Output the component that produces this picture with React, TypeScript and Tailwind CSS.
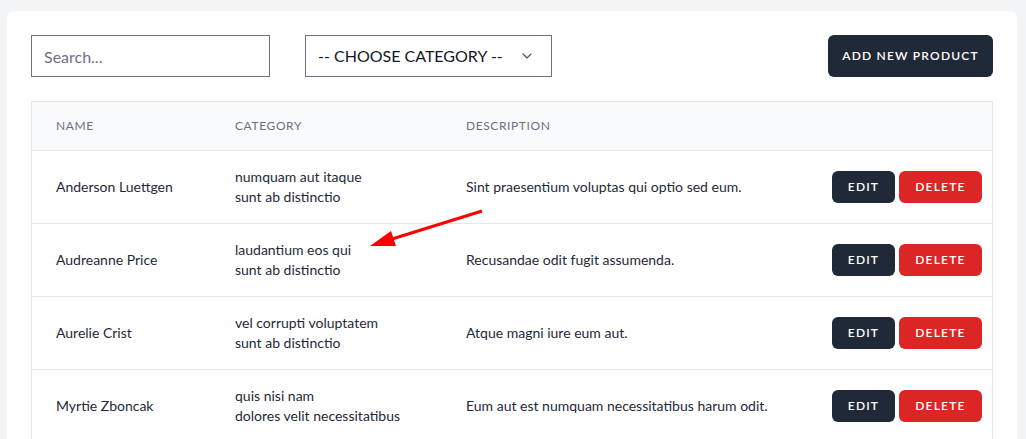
import { ChevronDown } from "lucide-react";

const products = [
  { name: "Anderson Luettgen", category: ["numquam aut itaque", "sunt ab distinctio"], description: "Sint praesentium voluptas qui optio sed eum." },
  { name: "Audreanne Price", category: ["laudantium eos qui", "sunt ab distinctio"], description: "Recusandae odit fugit assumenda." },
  { name: "Aurelie Crist", category: ["vel corrupti voluptatem", "sunt ab distinctio"], description: "Atque magni iure eum aut." },
  { name: "Myrtie Zboncak", category: ["quis nisi nam", "dolores velit necessitatibus"], description: "Eum aut est numquam necessitatibus harum odit." },
];

function Row({ p }: { p: (typeof products)[number] }) {
  return (
    <div className="flex items-center border-t border-[#e5e7eb] text-sm text-[#1f2937]">
      <div className="w-[179px] pl-6 py-4">{p.name}</div>
      <div className="w-[231px] pl-6 py-4">
        {p.category.map((c) => (
          <div key={c}>{c}</div>
        ))}
      </div>
      <div className="flex-1 pl-6 py-4">{p.description}</div>
      <div className="flex gap-1 pr-[10px]">
        <button className="h-8 w-[63px] rounded-md bg-[#1f2937] text-xs font-semibold tracking-widest text-white">EDIT</button>
        <button className="h-8 w-[83px] rounded-md bg-[#dc2626] text-xs font-semibold tracking-widest text-white">DELETE</button>
      </div>
    </div>
  );
}

export default function App() {
  return (
    <div className="relative min-h-screen bg-[#f3f4f6] pl-[7px] pr-[9px] pt-[11px]" style={{ fontFamily: 'Lato, sans-serif' }}>
      <div className="rounded-t-lg bg-white px-6 pt-6 pb-6">
        <div className="flex items-center">
          <input
            placeholder="Search..."
            className="h-[42px] w-[239px] border border-[#6b7280] px-3 text-base text-[#1f2937] placeholder:text-[#6b7280] outline-none"
          />
          <div className="ml-[35px] flex h-[42px] w-[247px] items-center justify-between border border-[#6b7280] pl-3 pr-4 text-base text-[#111827]">
            <span>-- CHOOSE CATEGORY --</span>
            <ChevronDown className="h-4 w-4 text-[#4b5563]" strokeWidth={1.75} />
          </div>
          <button className="ml-auto h-[42px] w-[165px] rounded-md bg-[#1f2937] text-xs font-semibold tracking-widest text-white">
            ADD NEW PRODUCT
          </button>
        </div>

        <div className="mt-6 border-x border-b border-[#e5e7eb]">
          <div className="flex border-t border-[#e5e7eb] bg-[#f9fafb] text-xs uppercase tracking-wider text-[#6b7280]">
            <div className="w-[179px] pl-6 py-4">Name</div>
            <div className="w-[231px] pl-6 py-4">Category</div>
            <div className="flex-1 pl-6 py-4">Description</div>
          </div>
          {products.map((p) => (
            <Row key={p.name} p={p} />
          ))}
        </div>
      </div>

      <svg className="pointer-events-none absolute left-0 top-0" width="1026" height="439">
        <line x1="482" y1="211" x2="392" y2="239" stroke="#ff0000" strokeWidth="3" />
        <polygon points="370,246 391,231 396,246" fill="#ff0000" />
      </svg>
    </div>
  );
}
